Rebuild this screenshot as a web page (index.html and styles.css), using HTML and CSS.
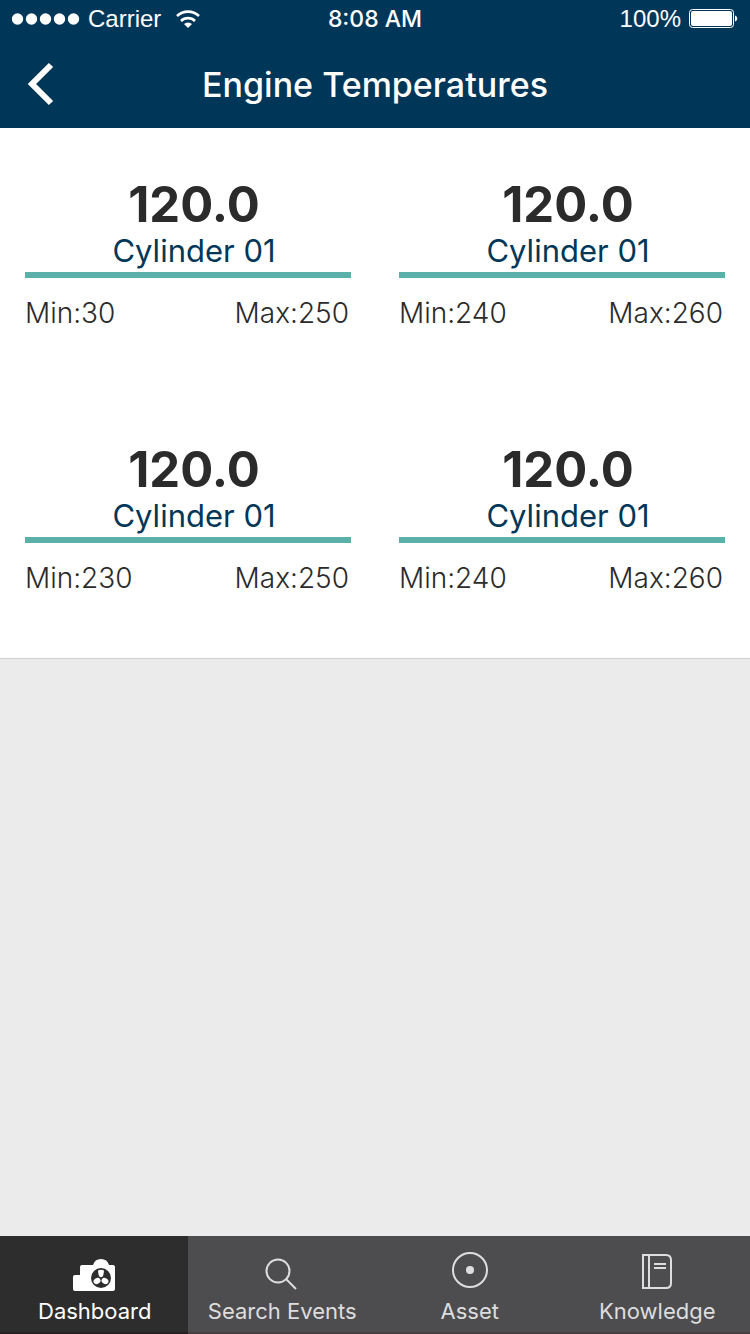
FILE: index.html
```html
<!DOCTYPE html>
<html lang="en">
<head>
<meta charset="utf-8">
<meta name="viewport" content="width=device-width, initial-scale=1">
<title>Engine Temperatures</title>
<link rel="stylesheet" href="styles.css">
</head>
<body>
<div class="app">
  <header class="top">
    <div class="status">
      <div class="status-left">
        <svg class="signal" width="68" height="12" viewBox="0 0 68 12" fill="currentColor" aria-hidden="true"><circle cx="5.500" cy="6" r="5.700"/><circle cx="19.500" cy="6" r="5.700"/><circle cx="33.500" cy="6" r="5.700"/><circle cx="47.500" cy="6" r="5.700"/><circle cx="61.500" cy="6" r="5.700"/></svg>
        <span class="carrier">Carrier</span>
        <svg class="wifi" width="26" height="20" viewBox="0 0 26 20" fill="none" stroke="currentColor" stroke-width="2.600" aria-hidden="true"><path d="M2 7a16 16 0 0 1 22 0"/><path d="M6 12a10 10 0 0 1 14 0"/><path d="M13 19l-4-4a5.800 5.800 0 0 1 8 0z" fill="currentColor" stroke="none"/></svg>
      </div>
      <span class="time">8:08 AM</span>
      <div class="status-right">
        <span>100%</span>
        <svg width="49" height="20" viewBox="0 0 49 20" aria-hidden="true"><rect x=".5" y=".5" width="44" height="18" rx="3" fill="none" stroke="currentColor"/><rect x="2" y="2" width="41" height="15" rx="2" fill="currentColor"/><path d="M46 6.500c3 1 3 5 0 6z" fill="currentColor"/></svg>
      </div>
    </div>
    <div class="nav">
      <button class="back" type="button" aria-label="Back"><svg width="28" height="44" viewBox="0 0 28 44" fill="none" stroke="currentColor" stroke-width="6" aria-hidden="true"><path d="M24 3L5 22l19 19"/></svg></button>
      <h1 class="title">Engine Temperatures</h1>
    </div>
  </header>
  <main class="content">
    <section class="gauges">
      <article class="gauge">
        <p class="value">120.0</p>
        <h2 class="name">Cylinder 01</h2>
        <div class="range"><span>Min:30</span><span>Max:250</span></div>
      </article>
      <article class="gauge">
        <p class="value">120.0</p>
        <h2 class="name">Cylinder 01</h2>
        <div class="range"><span>Min:240</span><span>Max:260</span></div>
      </article>
      <article class="gauge">
        <p class="value">120.0</p>
        <h2 class="name">Cylinder 01</h2>
        <div class="range"><span>Min:230</span><span>Max:250</span></div>
      </article>
      <article class="gauge">
        <p class="value">120.0</p>
        <h2 class="name">Cylinder 01</h2>
        <div class="range"><span>Min:240</span><span>Max:260</span></div>
      </article>
    </section>
  </main>
  <nav class="tabs">
    <a class="tab active" href="#dashboard" aria-current="page">
      <svg width="44" height="40" viewBox="0 0 44 40" aria-hidden="true"><path fill="currentColor" d="M0 25a2 2 0 0 1 2-2h5v-8a2 2 0 0 1 2-2h11a8.300 8.300 0 0 1 16 0h4a2 2 0 0 1 2 2v22a2 2 0 0 1-2 2H2a2 2 0 0 1-2-2z"/><circle class="hub" cx="28" cy="26" r="10"/><g fill="currentColor"><path d="M25 18.500q3-1.400 6 0l-.6 4.500q-.8 2.200-2.400 2.200t-2.400-2.200z"/><ellipse cx="24" cy="29" rx="3.600" ry="2.900" transform="rotate(-30 24 29)"/><ellipse cx="32" cy="29" rx="3.600" ry="2.900" transform="rotate(30 32 29)"/></g></svg>
      <span>Dashboard</span>
    </a>
    <a class="tab" href="#search">
      <svg width="44" height="40" viewBox="0 0 44 40" fill="none" stroke="currentColor" stroke-width="2" aria-hidden="true"><circle cx="18" cy="19" r="11.500"/><path d="M26 27l10 10"/></svg>
      <span>Search Events</span>
    </a>
    <a class="tab" href="#asset">
      <svg width="44" height="40" viewBox="0 0 44 40" aria-hidden="true"><circle cx="22" cy="18" r="17" fill="none" stroke="currentColor" stroke-width="2"/><circle cx="22" cy="18" r="4" fill="currentColor"/></svg>
      <span>Asset</span>
    </a>
    <a class="tab" href="#knowledge">
      <svg width="44" height="40" viewBox="0 0 44 40" fill="none" stroke="currentColor" stroke-width="2" aria-hidden="true"><path d="M8 3h23q5 0 5 5v23q0 5-5 5H8zM14 3v33M19 12h12M19 16h12"/></svg>
      <span>Knowledge</span>
    </a>
  </nav>
</div>
</body>
</html>
```
FILE: styles.css
```css
* { box-sizing: border-box; }

body {
  margin: 0;
  font-family: Inter, "Liberation Sans", sans-serif;
  color: #2b2b2b;
  background: #ebebeb;
}

.app {
  display: flex;
  flex-direction: column;
  min-height: 100vh;
}

.top {
  background: #003759;
  color: #fff;
}

.status {
  display: grid;
  grid-template-columns: 1fr auto 1fr;
  align-items: center;
  height: 38px;
  padding: 0 12px;
  font-family: "Liberation Sans", sans-serif;
  font-size: 24px;
  line-height: 28px;
}

.status svg { display: block; }

.status-left,
.status-right {
  display: flex;
  align-items: center;
  gap: 8px;
}

.status-right { justify-content: flex-end; }

.wifi { margin-left: 6px; }

.time {
  font-family: Inter, sans-serif;
  font-size: 23px;
  font-weight: 500;
}

.nav {
  display: grid;
  grid-template-columns: 80px 1fr 80px;
  align-items: center;
  height: 90px;
  padding-top: 2px;
}

.back {
  padding: 0 0 0 27px;
  border: 0;
  background: none;
  color: inherit;
  text-align: left;
}

.back svg { display: block; }

.title {
  margin: 0;
  padding-top: 2px;
  font-size: 34px;
  font-weight: 500;
  line-height: 40px;
  text-align: center;
}

.content { flex: 1; }

.gauges {
  display: grid;
  grid-template-columns: 1fr 1fr;
  gap: 111px 48px;
  padding: 49px 25px 62px;
  background: #fff;
  border-bottom: 1px solid #cfcfcf;
}

.value {
  margin: 0;
  padding-left: 12px;
  font-size: 49px;
  font-weight: 700;
  line-height: 56px;
  text-align: center;
}

.name {
  margin: 0;
  padding: 0 0 3px 12px;
  border-bottom: 6px solid #5bb0aa;
  color: #003759;
  font-size: 31px;
  font-weight: 400;
  line-height: 36px;
  text-align: center;
}

.range {
  display: flex;
  justify-content: space-between;
  padding: 18px 2px 1px 0;
  font-size: 28px;
  font-weight: 300;
  line-height: 34px;
}

.tabs {
  display: grid;
  grid-template-columns: repeat(4, 1fr);
  background: #4d4d4f;
  color: #dedede;
}

.tab {
  display: flex;
  flex-direction: column;
  align-items: center;
  gap: 6px;
  padding: 16px 0 8px 2px;
  border-bottom: 2px solid #483e40;
  color: inherit;
  font-size: 22px;
  line-height: 26px;
  text-decoration: none;
}

.tab svg { display: block; }

.active {
  background: #2d2d2d;
  border-color: #281f22;
  color: #fff;
}

.hub { fill: #2d2d2d; }
```
